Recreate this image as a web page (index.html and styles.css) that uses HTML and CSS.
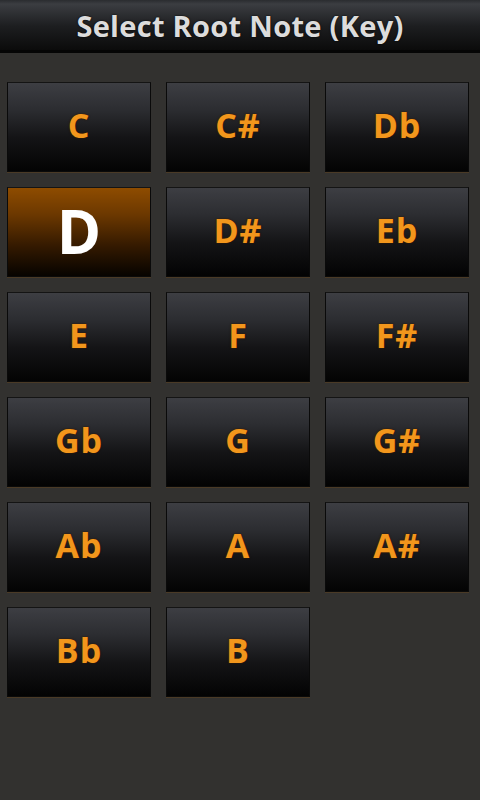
FILE: index.html
```html
<!DOCTYPE html>
<html>
<head>
<meta charset="utf-8">
<link rel="stylesheet" href="styles.css">
</head>
<body>
<div class="header"><h1 class="title">Select Root Note (Key)</h1></div>
<div class="grid">
  <div class="key">C</div>
  <div class="key">C#</div>
  <div class="key">Db</div>
  <div class="key selected">D</div>
  <div class="key">D#</div>
  <div class="key">Eb</div>
  <div class="key">E</div>
  <div class="key">F</div>
  <div class="key">F#</div>
  <div class="key">Gb</div>
  <div class="key">G</div>
  <div class="key">G#</div>
  <div class="key">Ab</div>
  <div class="key">A</div>
  <div class="key">A#</div>
  <div class="key">Bb</div>
  <div class="key">B</div>
</div>
</body>
</html>
```
FILE: styles.css
```css
html, body {
  margin: 0;
  padding: 0;
  background: #32312f;
  height: 800px;
  overflow: hidden;
  font-family: "Open Sans", "DejaVu Sans", sans-serif;
}
.header {
  height: 50px;
  background: linear-gradient(#2a2c2f 0px, #3b3d41 4px, #1d1e20 26px, #0b0b0b 50px);
  border-bottom: 3px solid #050505;
  display: flex;
  align-items: center;
  justify-content: center;
}
.title {
  margin: 0;
  font-size: 29px;
  font-weight: 700;
  color: #dcdcdc;
  letter-spacing: 0.3px;
  text-shadow: 0 0 2px #000;
  line-height: 1;
  padding-top: 1px;
}
.grid {
  display: grid;
  grid-template-columns: repeat(3, 144px);
  grid-auto-rows: 90px;
  column-gap: 15px;
  row-gap: 15px;
  padding: 29px 0 0 7px;
}
.key {
  box-sizing: border-box;
  border: 1px solid #0a0a0a;
  border-top-color: #141414;
  background: linear-gradient(#3d3e43 0%, #2c2d31 30%, #141416 62%, #030303 100%);
  box-shadow: 0 1px 0 #4a3a26;
  display: flex;
  align-items: center;
  justify-content: center;
  color: #f2961c;
  font-weight: 700;
  font-size: 34px;
  letter-spacing: 1px;
  text-shadow: 0 0 2px #3a1e00, 0 0 1px #2a1500;
  padding-bottom: 4px;
}
.key.selected {
  background: linear-gradient(#8e4c00 0%, #6c3800 30%, #351a00 65%, #060300 100%);
  color: #ffffff;
  font-size: 60px;
  letter-spacing: 0;
  text-shadow: none;
  padding-bottom: 2px;
}
```
